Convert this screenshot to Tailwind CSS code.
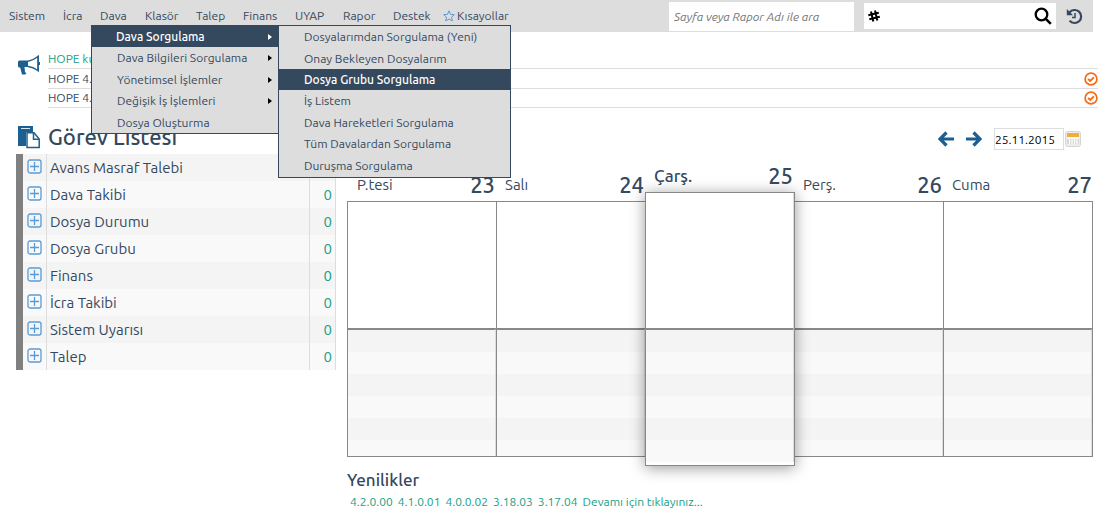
<!DOCTYPE html>
<html lang="tr">
<head>
<meta charset="utf-8">
<meta name="viewport" content="width=device-width, initial-scale=1">
<title>HOPE - Görev Listesi</title>
<script src="https://cdn.jsdelivr.net/npm/@tailwindcss/browser@4"></script>
</head>
<body class="bg-white font-['Ubuntu','Noto_Sans',sans-serif] text-xs text-[#34495e]">
<svg class="hidden" aria-hidden="true">
  <symbol id="plus" viewBox="0 0 15 15"><rect x="1" y="1" width="13" height="13" rx="2" fill="none" stroke="#5b9bd5" stroke-width="1.3"/><path d="M7.500 3v9M3 7.500h9" stroke="#5b9bd5" stroke-width="1.300"/></symbol>
  <symbol id="check" viewBox="0 0 14 14"><circle cx="7" cy="7" r="5.900" fill="none" stroke="#f96a12" stroke-width="1.700"/><path d="M4.200 7l2 2 3.700-3.700" fill="none" stroke="#f96a12" stroke-width="1.900"/></symbol>
  <symbol id="arrow" viewBox="0 0 16 16"><path d="M8.500 1.500L2 8l6.500 6.500M2.500 8H16" fill="none" stroke="#1f5f8f" stroke-width="3.200"/></symbol>
  <symbol id="caret" viewBox="0 0 4 6"><path d="M0 0l4 3-4 3z" fill="currentColor"/></symbol>
</svg>

<header class="mr-3.5 flex h-8 items-center bg-[#ddd]">
  <nav class="relative flex-1 pl-[9px]" aria-label="Ana menü">
    <ul class="flex h-8 items-center whitespace-nowrap">
      <li class="w-[54px]"><a href="#">Sistem</a></li>
      <li class="w-[37px]"><a href="#">İcra</a></li>
      <li class="w-[45px]"><a href="#">Dava</a></li>
      <li class="w-[51px]"><a href="#">Klasör</a></li>
      <li class="w-[47px]"><a href="#">Talep</a></li>
      <li class="w-[52px]"><a href="#">Finans</a></li>
      <li class="w-12"><a href="#">UYAP</a></li>
      <li class="w-[50px]"><a href="#">Rapor</a></li>
      <li class="w-[50px]"><a href="#">Destek</a></li>
      <li><a href="#" class="flex items-center gap-0.5"><svg class="size-3" viewBox="0 0 12 12"><path d="M6 .8l1.500 3.500 3.800.4-2.800 2.500.8 3.700L6 9l-3.300 1.900.8-3.700L.7 4.700l3.800-.4z" fill="none" stroke="#5b9bd5" stroke-width="1"/></svg>Kısayollar</a></li>
    </ul>
    <ul class="absolute top-[25px] left-[91px] z-20 w-[188px] border border-[#34495e] bg-[#ddd] whitespace-nowrap">
      <li><a href="#" class="flex h-[21px] items-center justify-between bg-[#34495e] pr-1.5 pl-6 font-medium text-white">Dava Sorgulama<svg class="h-1.5 w-1"><use href="#caret"/></svg></a></li>
      <li><a href="#" class="flex h-[22px] items-center justify-between pr-1.5 pl-[25px]">Dava Bilgileri Sorgulama<svg class="h-1.5 w-1 text-black"><use href="#caret"/></svg></a></li>
      <li><a href="#" class="flex h-[21px] items-center justify-between pr-1.5 pl-[25px]">Yönetimsel İşlemler<svg class="h-1.5 w-1 text-black"><use href="#caret"/></svg></a></li>
      <li><a href="#" class="flex h-[22px] items-center justify-between pr-1.5 pl-[25px]">Değişik İş İşlemleri<svg class="h-1.5 w-1 text-black"><use href="#caret"/></svg></a></li>
      <li><a href="#" class="flex h-[21px] items-center pl-[25px]">Dosya Oluşturma</a></li>
    </ul>
    <ul class="absolute top-[25px] left-[278px] z-20 w-[233px] border border-[#34495e] bg-[#ddd] whitespace-nowrap">
      <li><a href="#" class="flex h-[22px] items-center pl-[25px]">Dosyalarımdan Sorgulama (Yeni)</a></li>
      <li><a href="#" class="flex h-[21px] items-center pl-[25px]">Onay Bekleyen Dosyalarım</a></li>
      <li><a href="#" class="flex h-[21px] items-center bg-[#34495e] pl-[25px] font-medium text-white">Dosya Grubu Sorgulama</a></li>
      <li><a href="#" class="flex h-[22px] items-center pl-[25px]">İş Listem</a></li>
      <li><a href="#" class="flex h-[21px] items-center pl-[25px]">Dava Hareketleri Sorgulama</a></li>
      <li><a href="#" class="flex h-[22px] items-center pl-[25px]">Tüm Davalardan Sorgulama</a></li>
      <li><a href="#" class="flex h-[22px] items-center pl-[25px]">Duruşma Sorgulama</a></li>
    </ul>
  </nav>
  <input type="search" aria-label="Sayfa veya Rapor Adı ile ara" placeholder="Sayfa veya Rapor Adı ile ara" class="h-[29px] w-[185px] bg-white px-[5px] text-xs italic placeholder:text-[#757575]">
  <form class="ml-2.5 flex h-[26px] w-48 items-center bg-white px-1">
    <label for="no" aria-label="Numara"><svg class="size-3" viewBox="0 0 12 12"><path d="M3 1.500L5.300 11.500M7 .5L9.300 10.500M.3 5.300L10.800 2.800M1.300 9.200L11.800 6.700" stroke="#000" stroke-width="2"/></svg></label>
    <input id="no" type="text" class="min-w-0 flex-1 px-1">
    <button aria-label="Ara"><svg class="size-[18px]" viewBox="0 0 18 18"><circle cx="7.500" cy="7.500" r="5.800" fill="none" stroke="#000" stroke-width="2.300"/><path d="M11.800 11.800l5 5" stroke="#000" stroke-width="2.600"/></svg></button>
  </form>
  <button aria-label="Geçmiş" class="mr-2.5 ml-2.5"><svg class="size-[17px]" viewBox="0 0 17 17"><path d="M3.500 4.500A6.500 6.500 0 1 1 3.600 12.600" fill="none" stroke="#34495e" stroke-width="2.200"/><path d="M.8 1v6.200H7z" fill="#34495e"/><path d="M9 5v4.500H6" fill="none" stroke="#34495e" stroke-width="1.500"/></svg></button>
</header>

<section class="mt-[17px] mr-[9px] ml-[18px] flex" aria-label="Duyurular">
  <svg class="mt-1.5 mr-2 size-[22px] shrink-0" viewBox="0 0 22 22"><path d="M1.500 5.500H10v6.500H6.500L7 17l1.500 1.500L7 19.500H4L2.200 12.500H1.500Q0 12.500 0 11V7Q0 5.500 1.500 5.500z" fill="#1f5f8f"/><path d="M10 6.200Q15 5.500 20 1.500V15.500Q15 12 10 11.500" fill="none" stroke="#1f5f8f" stroke-width="1.500"/><path d="M20.300 .5v16M21.500 7v3" stroke="#1f5f8f" stroke-width="1.200"/></svg>
  <ul class="flex-1">
    <li class="flex h-5 items-center border-b border-[#ddd]"><a href="#" class="text-[#16a085]">HOPE kullanım</a></li>
    <li class="flex h-5 items-center justify-between border-b border-[#ddd]"><a href="#">HOPE 4.2.0.00</a><button aria-label="Okundu"><svg class="size-3.5"><use href="#check"/></svg></button></li>
    <li class="flex h-[19px] items-center justify-between border-b border-[#ddd]"><a href="#">HOPE 4.1.0.01</a><button aria-label="Okundu"><svg class="size-3.5"><use href="#check"/></svg></button></li>
  </ul>
</section>

<main class="mt-[18px] mr-3.5 ml-4 flex items-start gap-[11px]">
  <section class="w-80 shrink-0">
    <div class="flex h-7 items-start gap-2 pl-0.5">
      <svg class="h-[23px] w-[22px]" viewBox="0 0 22 23"><path d="M0 0h15v6H8v14H0z" fill="#1f5f8f"/><path d="M3 2.500h9" stroke="#dce8f0"/><path d="M9 6.800h7L21.200 13v8.500H9z" fill="#fff" stroke="#1f5f8f" stroke-width="1.500"/><path d="M15.500 7v6.300h5.500" fill="none" stroke="#1f5f8f" stroke-width="1.500"/></svg>
      <h1 class="text-[22px] leading-[22px] font-medium">Görev Listesi</h1>
    </div>
    <table class="w-full table-fixed border-collapse border-l-[7px] border-[#808080] text-[15px] leading-5">
      <colgroup><col class="w-[27px]"><col><col class="w-[26px]"></colgroup>
      <tbody>
        <tr class="h-[27px] odd:bg-[#f4f4f4] even:bg-[#f9f9f9]"><td class="border-r border-[#ddd] pb-0.5 pl-1"><button aria-label="Aç" class="block"><svg class="size-[15px]"><use href="#plus"/></svg></button></td><td class="border-r border-[#ddd] pl-[3px]">Avans Masraf Talebi</td><td class="border-r border-[#ddd] pr-[3px] text-right text-[#16a085]">0</td></tr>
        <tr class="h-[27px] odd:bg-[#f4f4f4] even:bg-[#f9f9f9]"><td class="border-r border-[#ddd] pb-0.5 pl-1"><button aria-label="Aç" class="block"><svg class="size-[15px]"><use href="#plus"/></svg></button></td><td class="border-r border-[#ddd] pl-[3px]">Dava Takibi</td><td class="border-r border-[#ddd] pr-[3px] text-right text-[#16a085]">0</td></tr>
        <tr class="h-[27px] odd:bg-[#f4f4f4] even:bg-[#f9f9f9]"><td class="border-r border-[#ddd] pb-0.5 pl-1"><button aria-label="Aç" class="block"><svg class="size-[15px]"><use href="#plus"/></svg></button></td><td class="border-r border-[#ddd] pl-[3px]">Dosya Durumu</td><td class="border-r border-[#ddd] pr-[3px] text-right text-[#16a085]">0</td></tr>
        <tr class="h-[27px] odd:bg-[#f4f4f4] even:bg-[#f9f9f9]"><td class="border-r border-[#ddd] pb-0.5 pl-1"><button aria-label="Aç" class="block"><svg class="size-[15px]"><use href="#plus"/></svg></button></td><td class="border-r border-[#ddd] pl-[3px]">Dosya Grubu</td><td class="border-r border-[#ddd] pr-[3px] text-right text-[#16a085]">0</td></tr>
        <tr class="h-[27px] odd:bg-[#f4f4f4] even:bg-[#f9f9f9]"><td class="border-r border-[#ddd] pb-0.5 pl-1"><button aria-label="Aç" class="block"><svg class="size-[15px]"><use href="#plus"/></svg></button></td><td class="border-r border-[#ddd] pl-[3px]">Finans</td><td class="border-r border-[#ddd] pr-[3px] text-right text-[#16a085]">0</td></tr>
        <tr class="h-[27px] odd:bg-[#f4f4f4] even:bg-[#f9f9f9]"><td class="border-r border-[#ddd] pb-0.5 pl-1"><button aria-label="Aç" class="block"><svg class="size-[15px]"><use href="#plus"/></svg></button></td><td class="border-r border-[#ddd] pl-[3px]">İcra Takibi</td><td class="border-r border-[#ddd] pr-[3px] text-right text-[#16a085]">0</td></tr>
        <tr class="h-[27px] odd:bg-[#f4f4f4] even:bg-[#f9f9f9]"><td class="border-r border-[#ddd] pb-0.5 pl-1"><button aria-label="Aç" class="block"><svg class="size-[15px]"><use href="#plus"/></svg></button></td><td class="border-r border-[#ddd] pl-[3px]">Sistem Uyarısı</td><td class="border-r border-[#ddd] pr-[3px] text-right text-[#16a085]">0</td></tr>
        <tr class="h-[27px] odd:bg-[#f4f4f4] even:bg-[#f9f9f9]"><td class="border-r border-[#ddd] pb-0.5 pl-1"><button aria-label="Aç" class="block"><svg class="size-[15px]"><use href="#plus"/></svg></button></td><td class="border-r border-[#ddd] pl-[3px]">Talep</td><td class="border-r border-[#ddd] pr-[3px] text-right text-[#16a085]">0</td></tr>
      </tbody>
    </table>
  </section>

  <section class="min-w-0 flex-1 pt-0.5">
    <div class="flex h-[22px] items-center justify-end pr-3">
      <button aria-label="Önceki hafta" class="mr-3"><svg class="size-4"><use href="#arrow"/></svg></button>
      <button aria-label="Sonraki hafta" class="mr-3"><svg class="size-4 rotate-180"><use href="#arrow"/></svg></button>
      <input type="text" aria-label="Tarih" value="25.11.2015" class="h-[22px] w-[70px] border border-[#ddd] text-xs text-black">
      <button aria-label="Takvim" class="ml-px"><svg class="size-4" viewBox="0 0 16 16"><rect x=".5" y=".5" width="15" height="15" rx="2" fill="#f0ede8" stroke="#d8d4d0"/><path d="M2 2h12v4H2z" fill="#efae3a"/><path d="M2 6h12v7H2z" fill="#d5d5d5"/><path d="M2 7h12M4.500 6v7M7 6v7M9.500 6v7M12 6v7" stroke="#fff" stroke-width="1.300"/></svg></button>
    </div>

    <div class="mt-[17px] mr-px grid grid-cols-5 items-center">
      <div>
        <div class="flex h-[25px] items-start justify-between pr-px pl-2.5 leading-[18px]"><span class="text-[15px]">P.tesi</span><span class="text-[22px] font-medium">23</span></div>
        <div class="flex h-64 flex-col border-y border-l border-[#888]"><div class="h-[127px] border-b border-[#888]"></div><div class="flex-1 border-t border-r border-t-[#888] border-r-[#ddd] bg-[repeating-linear-gradient(#f4f4f4_0_22px,#f9f9f9_22px_44px)]"></div></div>
      </div>
      <div>
        <div class="flex h-[25px] items-start justify-between pr-px pl-[9px] leading-[18px]"><span class="text-[15px]">Salı</span><span class="text-[22px] font-medium">24</span></div>
        <div class="flex h-64 flex-col border-y border-l border-[#888]"><div class="h-[127px] border-b border-[#888]"></div><div class="flex-1 border-t border-r border-t-[#888] border-r-[#ddd] bg-[repeating-linear-gradient(#f4f4f4_0_22px,#f9f9f9_22px_44px)]"></div></div>
      </div>
      <div class="z-10 -mr-px">
        <div class="flex h-[25px] items-start justify-between pr-0.5 pl-[9px] leading-[18px]"><span class="text-[17px] font-medium">Çarş.</span><span class="text-[22px] font-medium">25</span></div>
        <div class="flex h-[274px] flex-col border border-[#888] bg-white pb-[3px] shadow-[0_2px_14px_rgba(0,0,0,0.4)]"><div class="h-[136px] border-r border-b border-r-[#ddd] border-b-[#888]"></div><div class="flex-1 border-t border-r border-t-[#888] border-r-[#ddd] bg-[repeating-linear-gradient(#f4f4f4_0_22px,#f9f9f9_22px_44px)]"></div></div>
      </div>
      <div>
        <div class="flex h-[25px] items-start justify-between pr-px pl-[9px] leading-[18px]"><span class="text-[15px]">Perş.</span><span class="text-[22px] font-medium">26</span></div>
        <div class="flex h-64 flex-col border-y border-l border-[#888]"><div class="h-[127px] border-b border-[#888]"></div><div class="flex-1 border-t border-r border-t-[#888] border-r-[#ddd] bg-[repeating-linear-gradient(#f4f4f4_0_22px,#f9f9f9_22px_44px)]"></div></div>
      </div>
      <div class="-mr-px">
        <div class="flex h-[25px] items-start justify-between pr-px pl-[9px] leading-[18px]"><span class="text-[15px]">Cuma</span><span class="text-[22px] font-medium">27</span></div>
        <div class="flex h-64 flex-col border border-[#888]"><div class="h-[127px] border-b border-[#888]"></div><div class="flex-1 border-t border-r border-t-[#888] border-r-[#ddd] bg-[repeating-linear-gradient(#f4f4f4_0_22px,#f9f9f9_22px_44px)]"></div></div>
      </div>
    </div>

    <h2 class="mt-1 text-[17px] leading-5 font-medium">Yenilikler</h2>
    <div class="mt-1 flex gap-[5px] pl-[3px] text-xs leading-4 text-[#16a085]">
      <a href="#">4.2.0.00</a><a href="#">4.1.0.01</a><a href="#">4.0.0.02</a><a href="#">3.18.03</a><a href="#">3.17.04</a><a href="#">Devamı için tıklayınız...</a>
    </div>
  </section>
</main>
</body>
</html>
